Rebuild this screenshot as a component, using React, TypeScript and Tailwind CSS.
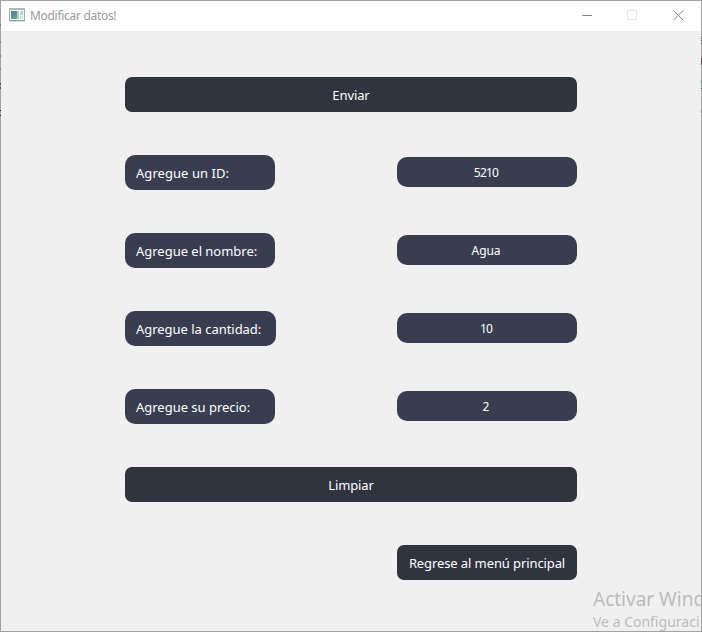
type Field = { label: string; value: string; labelClass: string; valueClass: string };

const fields: Field[] = [
  { label: 'Agregue un ID:', value: '5210', labelClass: 'w-[150px] tracking-[0.05px]', valueClass: 'tracking-[-0.8px]' },
  { label: 'Agregue el nombre:', value: 'Agua', labelClass: 'w-[150px] tracking-[-0.02px]', valueClass: 'tracking-[-0.1px]' },
  { label: 'Agregue la cantidad:', value: '10', labelClass: 'w-[151px] tracking-[-0.03px]', valueClass: 'tracking-[-0.8px]' },
  { label: 'Agregue su precio:', value: '2', labelClass: 'w-[150px] tracking-[-0.02px]', valueClass: '' },
];

function TitleBar() {
  return (
    <header className="flex h-[30px] shrink-0 items-center bg-white pl-2">
      <svg width="16" height="14" viewBox="0 0 16 14" className="mb-[2px] shrink-0" shapeRendering="crispEdges">
        <defs>
          <linearGradient id="pane" x1="0" y1="0" x2="0.6" y2="1">
            <stop offset="0" stopColor="#4c7ca0" />
            <stop offset="1" stopColor="#5aa98a" />
          </linearGradient>
        </defs>
        <rect x="0.5" y="0.5" width="15" height="12" fill="#f4f6f7" stroke="#a4abb0" />
        <rect x="0" y="0" width="16" height="2" fill="#b4b8bc" />
        <rect x="0" y="12" width="16" height="1" fill="#96a0a8" />
        <rect x="1" y="13" width="15" height="1" fill="#dddddd" />
        <rect x="2" y="3" width="6" height="8" fill="url(#pane)" />
        <rect x="8" y="3" width="2" height="8" fill="#a9cfc4" />
        <rect x="11" y="3" width="1" height="8" fill="#d8dcdf" />
        <rect x="12" y="3" width="2" height="4" fill="#b4cfe2" />
        <rect x="12" y="8" width="2" height="3" fill="#dbe6dc" />
      </svg>
      <span className="ml-[5px] text-[12px] leading-[16px] tracking-[-0.3px] text-[#999999]">Modificar datos!</span>
      <div className="ml-auto mr-[17px] flex items-center text-[#888888]">
        <svg width="11" height="11" viewBox="0 0 11 11" stroke="currentColor" fill="none" className="mr-[34px] mb-[2px]">
          <path d="M0 5.5h10" />
        </svg>
        <svg width="11" height="11" viewBox="0 0 11 11" stroke="#e6e6e6" fill="none" className="mr-[35px] mb-[2px]">
          <path d="M.5.5h9v9h-9z" />
        </svg>
        <svg width="11" height="11" viewBox="0 0 11 11" stroke="currentColor" fill="none" className="mb-[2px]">
          <path d="M.3.3l10 10M10.3.3l-10 10" />
        </svg>
      </div>
    </header>
  );
}

function EdgeMarks() {
  return (
    <>
      <svg className="absolute left-0 top-0" width="1" height="130" shapeRendering="crispEdges">
        <path d="M.5 24v2M.5 41v2M.5 55v2M.5 68v2" stroke="#6d7f9d" />
        <path d="M.5 83v2M.5 87v2" stroke="#704454" />
        <path d="M.5 110v1M.5 115v1" stroke="#222222" />
      </svg>
      <svg className="absolute right-0 top-0" width="1" height="130" shapeRendering="crispEdges">
        <path d="M.5 38v1M.5 40v1M.5 43v1M.5 81v1M.5 88v1" stroke="#333333" />
        <path d="M.5 58v7" stroke="#6b4658" />
        <path d="M.5 83v3" stroke="#6f9aa8" />
        <path d="M.5 110v3" stroke="#777777" />
      </svg>
    </>
  );
}

export default function App() {
  return (
    <div className="relative h-[632px] w-[702px] overflow-hidden bg-[#f0f0f0] font-['Noto_Sans','Open_Sans',sans-serif]">
      <div className="flex h-full flex-col border border-[#a2a2a2]">
        <TitleBar />
        <main className="ml-[124px] mt-[46px] flex w-[452px] flex-col gap-[43px] text-[13px] leading-[18px] text-white">
          <button className="h-[35px] rounded-[7px] bg-[#2f343f] tracking-[-0.1px]">Enviar</button>
          {fields.map((f) => (
            <div key={f.label} className="flex h-[35px] items-start justify-between">
              <label className={`flex h-[35px] items-center whitespace-nowrap rounded-[10px] bg-[#383e50] pl-[11px] ${f.labelClass}`}>
                {f.label}
              </label>
              <div className="mt-[2px] flex h-[30px] w-[180px] items-center justify-center rounded-[10px] bg-[#383e50] pr-[2px] pt-[2px] text-[12px]">
                <span className={f.valueClass}>{f.value}</span>
              </div>
            </div>
          ))}
          <button className="h-[35px] rounded-[7px] bg-[#2f343f] tracking-[-0.1px]">Limpiar</button>
          <button className="h-[35px] w-[180px] self-end whitespace-nowrap rounded-[7px] bg-[#2f343f] tracking-[-0.1px]">
            Regrese al menú principal
          </button>
        </main>
      </div>
      <div className="absolute bottom-px left-[593px] right-px top-[585px] overflow-hidden whitespace-nowrap text-[#bcbcbc]">
        <p className="text-[19px] leading-[28px]">Activar Wind</p>
        <p className="text-[14px] leading-[18px]">Ve a Configuraci</p>
      </div>
      <EdgeMarks />
    </div>
  );
}
